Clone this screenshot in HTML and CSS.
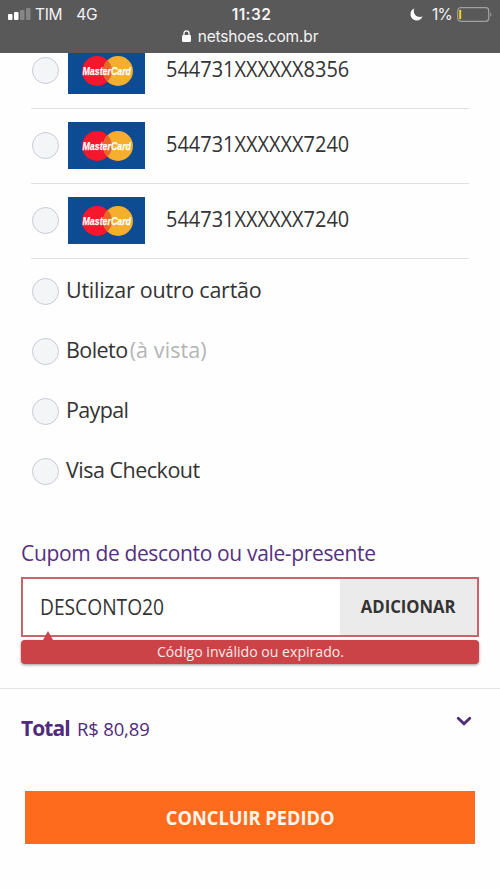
FILE: index.html
```
<!DOCTYPE html>
<html lang="pt-BR">
<head>
<meta charset="utf-8">
<title>Netshoes</title>
<link rel="stylesheet" href="styles.css">
</head>
<body>
<header class="bar">
  <div class="status">
    <div class="left">
      <svg width="23" height="12" viewBox="0 0 23 12"><rect y="6" width="4.5" height="6" rx="1" fill="#fff"/><rect x="6" y="4" width="4.5" height="8" rx="1" fill="#fff"/><rect x="12" y="2" width="4.5" height="10" rx="1" fill="#858585"/><rect x="18" width="4.5" height="12" rx="1" fill="#858585"/></svg>
      <span class="carrier">TIM</span><span class="net">4G</span>
    </div>
    <div class="clock">11:32</div>
    <div class="right">
      <svg width="13" height="13" viewBox="0 0 13 13"><path d="M4.2 .6C-.6 2.6-.6 9.2 3.4 11.6C6.8 13.6 11 12.2 12.6 8.6C6.600 10.400 2.400 6 4.200 .600z" fill="#fff"/></svg>
      <span class="pct">1%</span>
      <svg width="36" height="15" viewBox="0 0 36 15"><rect x=".7" y=".7" width="31" height="13.6" rx="3" fill="none" stroke="#a2a2a2" stroke-width="1.2"/><rect x="2.2" y="2.8" width="2" height="9.4" rx=".8" fill="#f5d51c"/><path d="M33.3 5.2q2.4 2.3 0 4.6z" fill="#a2a2a2"/></svg>
    </div>
  </div>
  <div class="address">
    <svg width="9" height="12" viewBox="0 0 9 12"><rect y="5" width="9" height="7" rx="1.2" fill="#fff"/><path d="M2 6V3.3a2.5 2.5 0 0 1 5 0V6" fill="none" stroke="#fff" stroke-width="1.3"/></svg>
    <span>netshoes.com.br</span>
  </div>
</header>
<main>
  <div class="cards">
    <label class="card"><i class="radio"></i><svg class="logo" viewBox="0 0 77 47"><rect width="77" height="47" fill="#0d4b93"/><circle cx="29" cy="24" r="15" fill="#f5172b"/><circle cx="50" cy="24" r="15" fill="#f6ae2f"/><path d="M39.5 13.3a15 15 0 0 1 0 21.4a15 15 0 0 1 0-21.4z" fill="#e5692b"/><text x="14.5" y="28" textLength="48.5" lengthAdjust="spacingAndGlyphs" class="brand">MasterCard</text></svg><span class="number">544731XXXXXX8356</span></label>
    <label class="card"><i class="radio"></i><svg class="logo" viewBox="0 0 77 47"><rect width="77" height="47" fill="#0d4b93"/><circle cx="29" cy="24" r="15" fill="#f5172b"/><circle cx="50" cy="24" r="15" fill="#f6ae2f"/><path d="M39.5 13.3a15 15 0 0 1 0 21.4a15 15 0 0 1 0-21.4z" fill="#e5692b"/><text x="14.5" y="28" textLength="48.5" lengthAdjust="spacingAndGlyphs" class="brand">MasterCard</text></svg><span class="number">544731XXXXXX7240</span></label>
    <label class="card"><i class="radio"></i><svg class="logo" viewBox="0 0 77 47"><rect width="77" height="47" fill="#0d4b93"/><circle cx="29" cy="24" r="15" fill="#f5172b"/><circle cx="50" cy="24" r="15" fill="#f6ae2f"/><path d="M39.5 13.3a15 15 0 0 1 0 21.4a15 15 0 0 1 0-21.4z" fill="#e5692b"/><text x="14.5" y="28" textLength="48.5" lengthAdjust="spacingAndGlyphs" class="brand">MasterCard</text></svg><span class="number">544731XXXXXX7240</span></label>
  </div>
  <div class="options">
    <label class="option"><i class="radio"></i><span class="name other">Utilizar outro cartão</span></label>
    <label class="option"><i class="radio"></i><span class="name boleto">Boleto</span><span class="name hint">(à vista)</span></label>
    <label class="option"><i class="radio"></i><span class="name paypal">Paypal</span></label>
    <label class="option"><i class="radio"></i><span class="name visa">Visa Checkout</span></label>
  </div>
  <section class="coupon">
    <h2><span>Cupom de desconto ou vale-presente</span></h2>
    <div class="field"><div class="value"><span>DESCONTO20</span></div><button class="add"><span>ADICIONAR</span></button></div>
    <div class="error"><span>Código inválido ou expirado.</span></div>
  </section>
  <section class="total">
    <div class="sum"><b>Total</b><span>R$ 80,89</span></div>
    <svg width="16" height="11" viewBox="0 0 16 11"><path d="M2.2 2.2L8 7.8l5.8-5.6" fill="none" stroke="#512b7b" stroke-width="2.8" stroke-linecap="round"/></svg>
  </section>
  <button class="finish"><span>CONCLUIR PEDIDO</span></button>
</main>
</body>
</html>
```
FILE: styles.css
```
* { box-sizing: border-box; }
body { margin: 0; width: 500px; height: 889px; overflow: hidden; background: #fefefe; color: #333; font-family: "Open Sans", "Noto Sans", sans-serif; }
button { border: 0; padding: 0; font: inherit; color: inherit; }
span, b { white-space: nowrap; }
.brand { font: italic bold 11px "Liberation Sans", sans-serif; fill: #fff; stroke: #fff; stroke-width: .25px; }

.bar { position: relative; z-index: 1; height: 52.5px; background: #595959; color: #f4f4f4; font-family: Inter, sans-serif; }
.status { display: grid; grid-template-columns: 1fr auto 1fr; align-items: center; height: 28px; padding: 0 7px 0 8px; }
.left, .right { display: flex; align-items: center; }
.right { justify-content: flex-end; }
.carrier { margin-left: 4px; font-size: 15.5px; letter-spacing: -.3px; }
.net { margin-left: 14px; font-size: 15.5px; letter-spacing: -.3px; }
.clock { margin-left: 2px; font-size: 15.5px; font-weight: 600; letter-spacing: .4px; }
.pct { margin: 0 5px 0 9px; font-size: 15.5px; letter-spacing: -.8px; }
.address { display: flex; justify-content: center; align-items: center; gap: 7px; height: 16px; font-size: 15.5px; letter-spacing: -.15px; }

.cards { margin: -19px 31px 0; }
.card { display: flex; align-items: center; height: 75px; border-bottom: 1.5px solid #e0e0e2; }
.radio { flex: none; width: 27px; height: 27px; margin-left: 1px; border: 1.5px solid #c9c9d8; border-radius: 50%; background: #f4f5f7; }
.logo { flex: none; width: 77px; height: 47px; margin-left: 9px; }
.number { margin: -4px 0 0 21px; font-size: 21.5px; transform: scaleX(.928); transform-origin: left; }
.options { margin: 3px 31px 0; }
.option { display: flex; align-items: center; height: 60px; }
.name { margin: -5px 0 0 7px; font-size: 21.5px; }
.other { letter-spacing: -.25px; }
.boleto { letter-spacing: -.55px; }
.paypal { letter-spacing: -.65px; }
.visa { letter-spacing: -.5px; }
.hint { margin-left: 2px; color: #b4b4b4; letter-spacing: .1px; }

.coupon { margin: 36.5px 21px 0; }
h2 { margin: 0; height: 39px; line-height: 30px; font-size: 21px; font-weight: 400; color: #55307f; letter-spacing: -.35px; }
.field { display: flex; height: 60px; border: 2px solid #cb636c; }
.value { display: flex; align-items: center; flex: 1; padding-left: 17px; font-size: 21px; background: #fff; }
.value span { transform: scaleX(.914); transform-origin: left; }
.add { width: 137px; background: #ebebeb; font-size: 18px; font-weight: 700; }
.add span { display: inline-block; transform: scaleX(.925); position: relative; top: -1px; }
.error { position: relative; height: 24px; margin-top: 3px; border-radius: 4px; background: #cb4346; box-shadow: 0 1px 3px #0006; color: #fbe9e9; text-align: center; font-size: 15px; line-height: 23px; }
.error span { display: inline-block; transform: scaleX(.94); }
.error::before { content: ""; position: absolute; left: 22px; top: -9px; border: 5px solid transparent; border-top: 0; border-bottom: 9px solid #cb4346; }
.total { display: flex; justify-content: space-between; height: 103px; margin-top: 24px; padding: 26px 28px 0 21px; border-top: 1.5px solid #e4e4e6; color: #512b7b; }
.total svg { margin-top: 1px; }
.sum { display: flex; align-items: baseline; height: 28px; gap: 7px; }
.sum b { font-size: 21px; line-height: 26px; letter-spacing: -.9px; }
.sum span { font-size: 18.5px; line-height: 26px; letter-spacing: -.15px; }
.finish { display: block; width: 450px; height: 53px; margin: 0 25px; background: #ff6b1c; color: #fff7ee; font-size: 19.5px; font-weight: 700; }
.finish span { display: inline-block; transform: scaleX(.935); }
```
